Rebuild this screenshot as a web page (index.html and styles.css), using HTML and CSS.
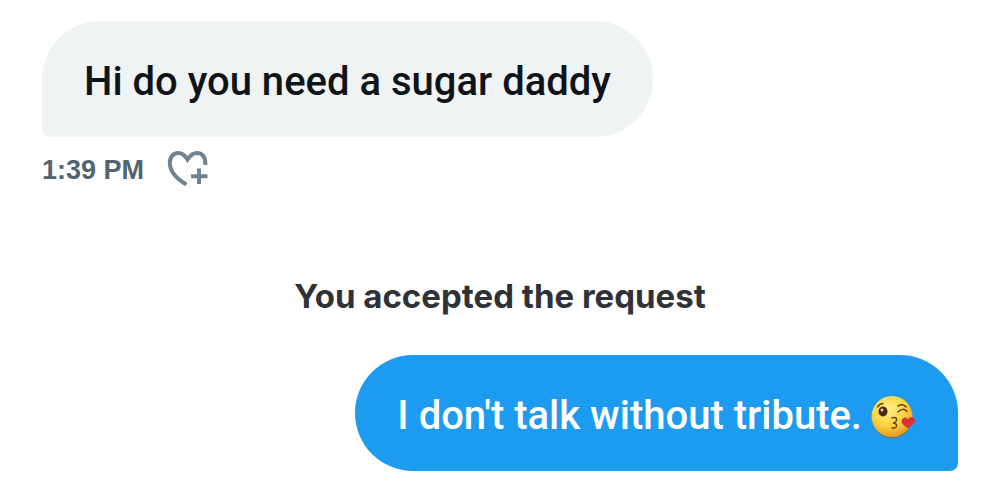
FILE: index.html
```html
<!DOCTYPE html>
<html lang="en">
<head>
    <meta charset="UTF-8">
    <meta name="viewport" content="width=device-width, initial-scale=1.0">
    <title>Messages</title>
    <link rel="stylesheet" href="styles.css">
</head>
<body>
    <main class="chat">
        <div class="message received">
            <p class="bubble">Hi do you need a sugar daddy</p>
            <div class="meta">
                <time datetime="13:39">1:39 PM</time>
                <button class="react" type="button" aria-label="Add reaction">
                    <svg width="42" height="40" viewBox="0 0 42 40" fill="none" stroke="#71838e" stroke-width="4">
                        <path d="M19.500 34.500C9 28.500 2.800 20.500 2.800 12.500C2.800 7 6.500 3 11.500 3C15.500 3 18 5.500 20.500 9.500C23 5.500 26 3 30 3C35.500 3 39 7.500 38.300 15"/>
                        <path d="M32 18.500V34M24 26.200H40.500"/>
                    </svg>
                </button>
            </div>
        </div>

        <p class="notice">You accepted the request</p>

        <div class="message sent">
            <p class="bubble">
                <span>I don't talk without tribute.</span>
                <svg class="emoji" width="46" height="46" viewBox="0 -2 46 46" role="img" aria-label="Face blowing a kiss">
                    <defs>
                        <radialGradient id="face" cx="42%" cy="32%" r="68%">
                            <stop offset="0" stop-color="#fff08a"/>
                            <stop offset="0.6" stop-color="#fbd43f"/>
                            <stop offset="1" stop-color="#e79c22"/>
                        </radialGradient>
                    </defs>
                    <ellipse cx="22" cy="23" rx="20" ry="20" fill="#716f49"/>
                    <circle cx="22" cy="21.500" r="20.500" fill="url(#face)"/>
                    <g fill="none" stroke="#6b431b" stroke-width="1.500" stroke-linecap="round">
                        <path d="M7.500 12Q9 9 13 8.500"/>
                        <path d="M28 11Q33 8 36 12"/>
                        <path d="M28 17Q33 12 37 16.500"/>
                        <path d="M22 23C28 21 28 27 23 28C28 28 28 34 22 33"/>
                    </g>
                    <ellipse cx="13" cy="16.500" rx="4.500" ry="5" fill="#4a2b12"/>
                    <circle cx="12" cy="15" r="1.500" fill="#e9cf9a"/>
                    <path d="M38 33C34 31 30.500 28 32 24.500C33.500 21.500 37 22 38 24.500C40 20.500 45 21.500 45 25.500C45 29 41 31 38 33Z" fill="#dc3038"/>
                </svg>
            </p>
        </div>
    </main>
</body>
</html>
```

FILE: styles.css
```css
body {
    margin: 0;
    background-color: #fff;
    font-family: Roboto, "Liberation Sans", sans-serif;
}

p {
    margin: 0;
}

.chat {
    display: flex;
    flex-direction: column;
    padding: 21px 42px 11px;
}

.message {
    display: flex;
    flex-direction: column;
}

.received {
    align-items: flex-start;
}

.sent {
    align-items: flex-end;
}

.bubble {
    display: flex;
    align-items: center;
    gap: 8px;
    padding: 37px 42px 31px;
    border-radius: 58px;
    font-size: 40px;
    font-weight: 500;
    line-height: 48px;
}

.received .bubble {
    background-color: #eff3f4;
    color: #0f1419;
    border-bottom-left-radius: 8px;
}

.sent .bubble {
    background-color: #1d9bf0;
    color: #fff;
    border-bottom-right-radius: 8px;
}

.emoji {
    flex: none;
}

.meta {
    display: flex;
    align-items: center;
    gap: 23px;
    margin-top: 13px;
    color: #536471;
    font-family: "Liberation Sans", sans-serif;
    font-size: 27px;
    font-weight: bold;
    line-height: 40px;
}

.react {
    display: flex;
    padding: 0;
    border: none;
    background: none;
    cursor: pointer;
}

.notice {
    margin: 82px 0 35px;
    color: #2f3338;
    font-family: Inter, sans-serif;
    font-size: 33px;
    font-weight: 700;
    line-height: 48px;
    text-align: center;
}
```
